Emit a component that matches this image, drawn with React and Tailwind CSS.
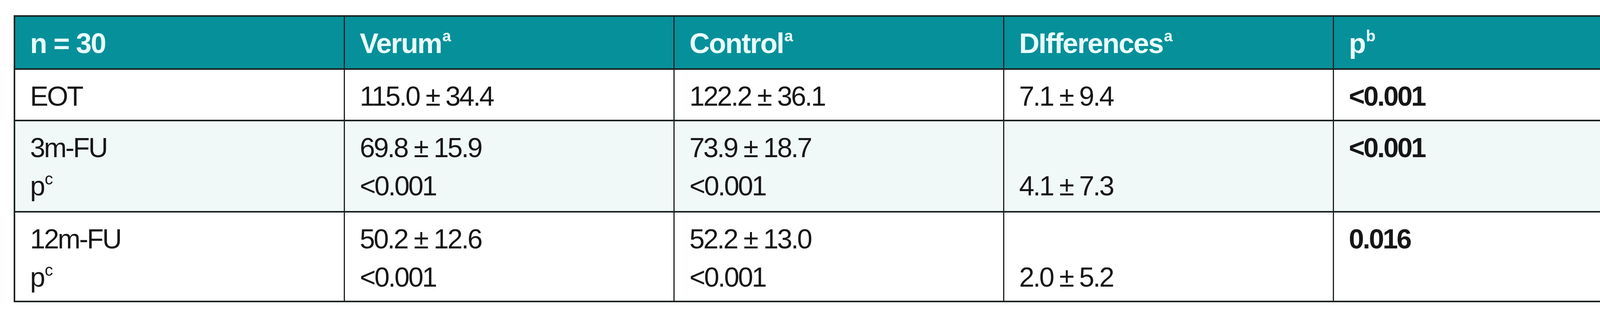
import React from 'react';

const font = { fontFamily: '"Liberation Sans", Arial, sans-serif' };

const head = [
  { label: 'n = 30' },
  { label: 'Verum', sup: 'a' },
  { label: 'Control', sup: 'a' },
  { label: 'DIfferences', sup: 'a' },
  { label: 'p', sup: 'b' },
];

// each body row: one array of lines per column, last column bold
const rows = [
  {
    h: 'h-[132px]',
    bg: 'bg-white',
    cells: [['EOT'], ['115.0 ± 34.4'], ['122.2 ± 36.1'], ['7.1 ± 9.4'], ['<0.001']],
  },
  {
    h: 'h-[234px]',
    bg: 'bg-[#f1f8f8]',
    cells: [['3m-FU', 'pc'], ['69.8 ± 15.9', '<0.001'], ['73.9 ± 18.7', '<0.001'], ['', '4.1 ± 7.3'], ['<0.001', '']],
  },
  {
    h: 'h-[226px]',
    bg: 'bg-white',
    cells: [['12m-FU', 'pc'], ['50.2 ± 12.6', '<0.001'], ['52.2 ± 13.0', '<0.001'], ['', '2.0 ± 5.2'], ['0.016', '']],
  },
];

function Line({ text, bold }) {
  if (!text) return <div className="h-[98px]" />;
  if (text === 'pc') {
    return (
      <div className="leading-[98px]">
        p<sup className="text-[42px] top-[-28px] ml-[2px]">c</sup>
      </div>
    );
  }
  return <div className={`leading-[98px] whitespace-nowrap ${bold ? 'font-bold' : ''}`}>{text}</div>;
}

export default function App() {
  return (
    <div className="w-[4307px] h-[800px] bg-white pt-[39px] pl-[35px]" style={font}>
      <table className="table-fixed w-[4228px] border-separate border-spacing-0 border-[4px] border-[#1a2121]">
        <thead>
          <tr className="h-[136px]">
            {head.map((c, i) => (
              <th
                key={i}
                className={`p-0 bg-[#06909a] text-[#e9ffff] font-bold text-[72px] tracking-[-0.03em] leading-[98px] text-left align-top pt-[19px] pl-[38px] border-b-[4px] border-[#1a2121] ${
                  i < 4 ? 'border-r-[3px]' : ''
                }`}
              >
                {c.label}
                {c.sup && <sup className="text-[40px] top-[-30px] ml-[2px] tracking-normal">{c.sup}</sup>}
              </th>
            ))}
          </tr>
        </thead>
        <tbody>
          {rows.map((r, ri) => (
            <tr key={ri} className={r.h}>
              {r.cells.map((lines, ci) => (
                <td
                  key={ci}
                  className={`${r.bg} align-top pt-[19px] pl-[38px] text-[70px] tracking-[-0.05em] text-[#161616] border-[#1a2121] ${
                    ci < 4 ? 'border-r-[3px]' : ''
                  } ${ri < 2 ? 'border-b-[4px]' : ''}`}
                >
                  {lines.map((t, li) => (
                    <Line key={li} text={t} bold={ci === 4} />
                  ))}
                </td>
              ))}
            </tr>
          ))}
        </tbody>
      </table>
    </div>
  );
}
